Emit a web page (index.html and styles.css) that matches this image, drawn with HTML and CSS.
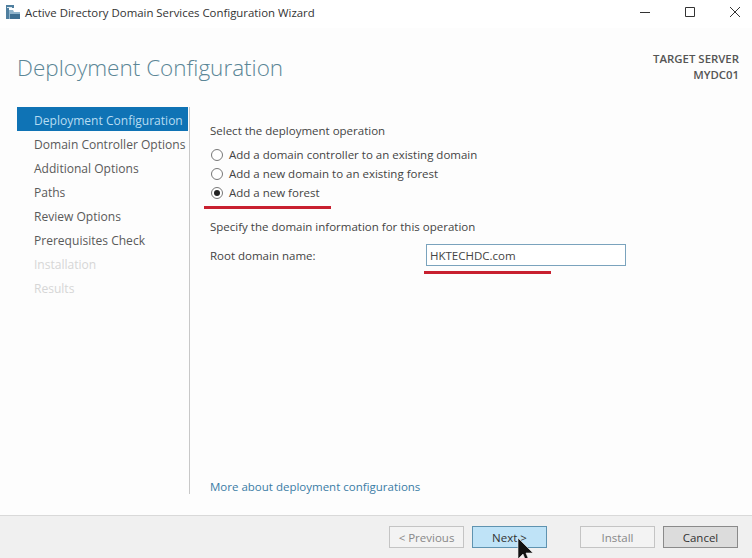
FILE: index.html
```html
<!DOCTYPE html>
<html lang="en">
<head>
<meta charset="utf-8">
<title>Active Directory Domain Services Configuration Wizard</title>
<link rel="stylesheet" href="styles.css">
</head>
<body>
<div class="window">
  <div class="titlebar">
    <svg class="appicon" width="16" height="16" viewBox="0 0 16 16"><path d="M1 1h8v3H4v11H1z" fill="#4f7f9f"/><path d="M4 6h4l1 2h6v7H4z" fill="#8fb4cc"/><path d="M5 10h10v5H5z" fill="#3d6f92"/><path d="M2 3h5v1H2z" fill="#dbe8f0"/></svg>
    <span class="wintitle">Active Directory Domain Services Configuration Wizard</span>
    <div class="winbtns">
      <svg width="12" height="12" viewBox="0 0 12 12"><path d="M1 6.5h10" stroke="#333" fill="none"/></svg>
      <svg width="12" height="12" viewBox="0 0 12 12"><path d="M1.5 1.5h9v9h-9z" stroke="#333" fill="none"/></svg>
      <svg width="12" height="12" viewBox="0 0 12 12"><path d="M1 1l10 10M11 1L1 11" stroke="#333" fill="none"/></svg>
    </div>
  </div>
  <header class="header">
    <h1 class="heading">Deployment Configuration</h1>
    <div class="server">TARGET SERVER<br>MYDC01</div>
  </header>
  <div class="main">
    <nav class="side">
      <div class="step on">Deployment Configuration</div>
      <div class="step">Domain Controller Options</div>
      <div class="step">Additional Options</div>
      <div class="step">Paths</div>
      <div class="step">Review Options</div>
      <div class="step">Prerequisites Check</div>
      <div class="step off">Installation</div>
      <div class="step off">Results</div>
    </nav>
    <section class="content">
      <div class="top">
        <p class="label first">Select the deployment operation</p>
        <div class="radio"><span class="dot"></span>Add a domain controller to an existing domain</div>
        <div class="radio"><span class="dot"></span>Add a new domain to an existing forest</div>
        <div class="radio"><span class="dot sel"></span>Add a new forest</div>
        <p class="label second">Specify the domain information for this operation</p>
        <div class="field">
          <label class="fname" for="root">Root domain name:</label>
          <input class="finput" id="root" value="HKTECHDC.com">
        </div>
      </div>
      <a class="more">More about deployment configurations</a>
    </section>
  </div>
  <footer class="footer">
    <button class="btn dis">&lt; Previous</button>
    <button class="btn next">Next &gt;</button>
    <button class="btn dis install">Install</button>
    <button class="btn cancel">Cancel</button>
  </footer>
  <div class="mark m1"></div>
  <div class="mark m2"></div>
  <svg class="cursor" width="20" height="28" viewBox="0 0 20 28"><path d="M1 1v21l5-5 4 10 3-1-4-10h7z" fill="#111" stroke="#eee" stroke-width=".6"/></svg>
</div>
</body>
</html>
```
FILE: styles.css
```css
* { box-sizing: border-box; }
html, body { margin: 0; padding: 0; }
body { width: 752px; height: 558px; overflow: hidden; background: #fdfdfd; font-family: "Open Sans", "Noto Sans", sans-serif; font-size: 11.5px; color: #444; }
.window { position: relative; width: 752px; height: 558px; display: flex; flex-direction: column; }
.titlebar { height: 28px; display: flex; align-items: center; padding: 0 0 4px 5px; background: #fff; flex: none; }
.appicon { margin-right: 4px; }
.wintitle { font-size: 11.4px; color: #333; }
.winbtns { margin-left: auto; display: flex; gap: 33px; padding-right: 11px; }
.header { height: 79px; flex: none; display: flex; justify-content: space-between; padding: 0 13px 0 17px; }
.heading { margin: 24px 0 0; font-size: 22.5px; font-weight: 300; color: #5b8696; line-height: 32px; letter-spacing: 0; }
.server { margin-top: 23px; text-align: right; font-size: 11.4px; line-height: 16px; font-weight: 600; color: #555; }
.main { flex: none; height: 408px; display: flex; padding: 0 0 21px 17px; }
.side { width: 173px; border-right: 1px solid #c8c8c8; flex: none; font-size: 12.05px; color: #5a5a5a; }
.step { height: 24px; line-height: 27px; padding-left: 17px; white-space: nowrap; }
.step.on { width: 171px; background: #0f73b5; color: #b6dcf2; }
.step.off { color: #d6d6d6; }
.content { flex: 1; padding: 16px 0 0 20px; display: flex; flex-direction: column; justify-content: space-between; }
.label { margin: 0; line-height: 16px; font-size: 11.5px; color: #444; }
.second { margin-top: 17px; }
.radio { height: 19px; display: flex; align-items: center; font-size: 11.5px; color: #444; }
.label.first { margin-bottom: 6px; }
.dot { width: 12px; height: 12px; border: 1px solid #777; border-radius: 50%; background: #fff; margin: 0 6px 0 1px; position: relative; flex: none; }
.dot.sel::after { content: ""; position: absolute; left: 2px; top: 2px; width: 6px; height: 6px; border-radius: 50%; background: #222; }
.field { display: flex; align-items: center; margin-top: 9px; height: 22px; }
.fname { width: 216px; font-size: 11.5px; color: #444; }
.finput { width: 200px; height: 22px; border: 1px solid #7aa3bd; background: #fff; padding: 0 3px; font: 11.5px "Open Sans", "Noto Sans", sans-serif; color: #444; outline: none; }
.more { font-size: 11.5px; line-height: 16px; color: #3a7ca5; margin-bottom: -1px; }
.footer { flex: 1; background: #f0f0f0; border-top: 1px solid #d9d9d9; display: flex; align-items: flex-start; padding: 10px 0 0 389px; }
.btn { width: 75px; height: 22px; border: 1px solid #c4c4c4; background: #f3f3f3; font: 11.5px "Open Sans", "Noto Sans", sans-serif; color: #888; padding: 0; margin-right: 8px; }
.btn.next { background: #bfe3f7; border-color: #5f93b0; color: #333; margin-right: 33px; }
.btn.cancel { background: #dcdcdc; border-color: #8a8a8a; color: #333; margin-right: 0; }
.mark { position: absolute; height: 3px; background: #c8202f; }
.m1 { left: 204px; top: 206px; width: 127px; }
.m2 { left: 424px; top: 271px; width: 127px; }
.cursor { position: absolute; left: 517px; top: 537px; }
```
